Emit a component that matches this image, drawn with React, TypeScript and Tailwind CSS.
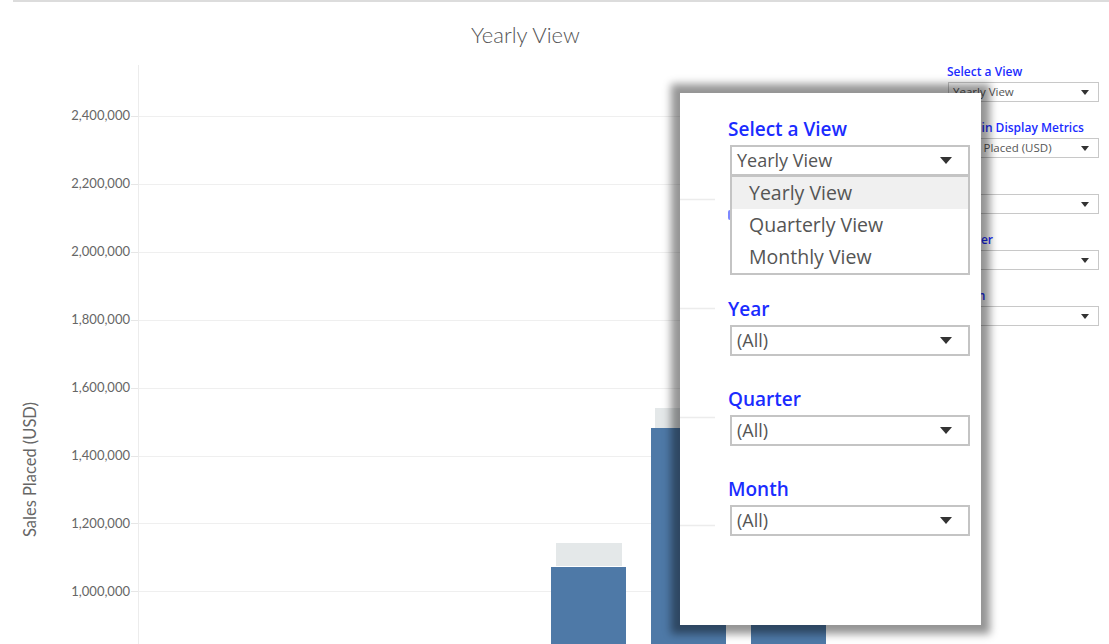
import React from "react";

const Arrow = ({ big }: { big?: boolean }) =>
  big ? (
    <svg width="12" height="7" viewBox="0 0 12 7">
      <path d="M0 0H12L6 7Z" fill="#333" />
    </svg>
  ) : (
    <svg width="8" height="5" viewBox="0 0 8 5">
      <path d="M0 0H8L4 5Z" fill="#333" />
    </svg>
  );

function SmallFilter({ label, value }: { label: string; value: string }) {
  return (
    <div className="flex flex-col">
      <div className="text-[12px] leading-[16px] font-semibold text-[#1b2cff] whitespace-nowrap">{label}</div>
      <div className="mt-[2px] ml-px w-[151px] h-[20px] border border-[#c8c8c8] flex items-center justify-between pl-[4px] pr-[9px] text-[11.5px] text-[#555] whitespace-nowrap">
        <span>{value}</span>
        <Arrow />
      </div>
    </div>
  );
}

function BigFilter({ label, value, open }: { label: string; value: string; open?: boolean }) {
  return (
    <div className="relative flex flex-col">
      <div className="text-[19px] leading-[24px] font-semibold text-[#1b2cff] whitespace-nowrap">{label}</div>
      <div className="mt-[4px] ml-[2px] w-[240px] h-[31px] border-2 border-[#c4c4c4] bg-white flex items-center justify-between pl-[5px] pr-[16px] text-[18px] text-[#555] whitespace-nowrap">
        <span>{value}</span>
        <Arrow big />
      </div>
      {open && (
        <div className="absolute z-10 left-[2px] top-full -mt-px w-[240px] border-2 border-[#c4c4c4] bg-white text-[19.5px] text-[#555]">
          {["Yearly View", "Quarterly View", "Monthly View"].map((t, i) => (
            <div
              key={t}
              className={`h-[32px] flex items-center pl-[17px] whitespace-nowrap ${i === 0 ? "bg-[#f0f0f0]" : ""}`}
            >
              {t}
            </div>
          ))}
        </div>
      )}
    </div>
  );
}

const ticks = ["2,400,000", "2,200,000", "2,000,000", "1,800,000", "1,600,000", "1,400,000", "1,200,000", "1,000,000"];

function Plot() {
  const g0 = 51;
  const step = 67.9;
  return (
    <svg width="810" height="579" viewBox="0 0 810 579" className="block">
      <line x1="8.5" y1="0" x2="8.5" y2="579" stroke="#ececec" strokeWidth="1" />
      {ticks.map((_, i) => {
        const y = Math.round(g0 + i * step) + 0.5;
        return (
          <g key={i}>
            <line x1="1" y1={y} x2="8" y2={y} stroke="#e6e6e6" strokeWidth="1" />
            <line x1="9" y1={y} x2="810" y2={y} stroke="#efefef" strokeWidth="1" />
          </g>
        );
      })}
      {/* bar 1 */}
      <rect x="426" y="478" width="66" height="23" fill="#e4e8e9" />
      <rect x="421" y="502" width="75" height="100" fill="#4e79a7" />
      {/* bar 2 */}
      <rect x="525" y="343" width="67" height="20" fill="#e4e8e9" />
      <rect x="521" y="363" width="75" height="240" fill="#4e79a7" />
      {/* bar 3 */}
      <rect x="625" y="250" width="67" height="20" fill="#e4e8e9" />
      <rect x="621" y="270" width="75" height="340" fill="#4e79a7" />
    </svg>
  );
}

export default function App() {
  return (
    <div className="relative w-[1109px] h-[644px] overflow-hidden bg-white font-['Open_Sans',sans-serif]">
      <div className="ml-[13px] h-[2px] bg-[#dcdcdc]" />
      <div className="flex">
        {/* chart */}
        <div className="w-[940px] flex flex-col font-['Lato',sans-serif]">
          <div className="pt-[19px] pl-[471px] h-[63px] text-[22px] leading-[28px] font-light text-[#555] whitespace-nowrap">
            Yearly View
          </div>
          <div className="flex h-[579px]">
            <div className="w-[60px] flex justify-center pt-[337px]">
              <div className="[writing-mode:vertical-rl] rotate-180 text-[16.5px] leading-[18px] text-[#666] whitespace-nowrap h-fit">
                Sales Placed (USD)
              </div>
            </div>
            <div className="w-[70px] flex flex-col pt-[17px]">
              {ticks.map((t) => (
                <div key={t} className="h-[67.9px] flex items-center justify-end text-[13px] leading-none text-[#666]">
                  {t}
                </div>
              ))}
            </div>
            <Plot />
          </div>
        </div>
        {/* right panel */}
        <div className="ml-[7px] pt-[62px] flex flex-col gap-[18px]">
          <SmallFilter label="Select a View" value="Yearly View" />
          <SmallFilter label="Domain Display Metrics" value="Sales Placed (USD)" />
          <SmallFilter label="Year" value="(All)" />
          <SmallFilter label="Quarter" value="(All)" />
          <SmallFilter label="Month" value="(All)" />
        </div>
      </div>

      {/* magnified callout */}
      <div className="absolute left-[680px] top-[93px] w-[301px] h-[532px] bg-white shadow-[0_0_8px_9px_rgba(0,0,0,0.42)]">
        <svg width="36" height="532" viewBox="0 0 36 532" className="absolute left-0 top-0">
          {[106, 215, 324, 432].map((y) => (
            <line key={y} x1="0" y1={y + 0.5} x2="35" y2={y + 0.5} stroke="#ececec" strokeWidth="1.5" />
          ))}
        </svg>
        <div className="relative pt-[24px] pl-[48px] flex flex-col gap-[31px]">
          <BigFilter label="Select a View" value="Yearly View" open />
          {/* second magnified filter, hidden under the open list: only a sliver of its label shows */}
          <div className="h-[59px] pt-[3px]">
            <div className="w-[2px] h-[10px] bg-[#7d88ff] rounded-l-full" />
          </div>
          <BigFilter label="Year" value="(All)" />
          <BigFilter label="Quarter" value="(All)" />
          <BigFilter label="Month" value="(All)" />
        </div>
      </div>
    </div>
  );
}
